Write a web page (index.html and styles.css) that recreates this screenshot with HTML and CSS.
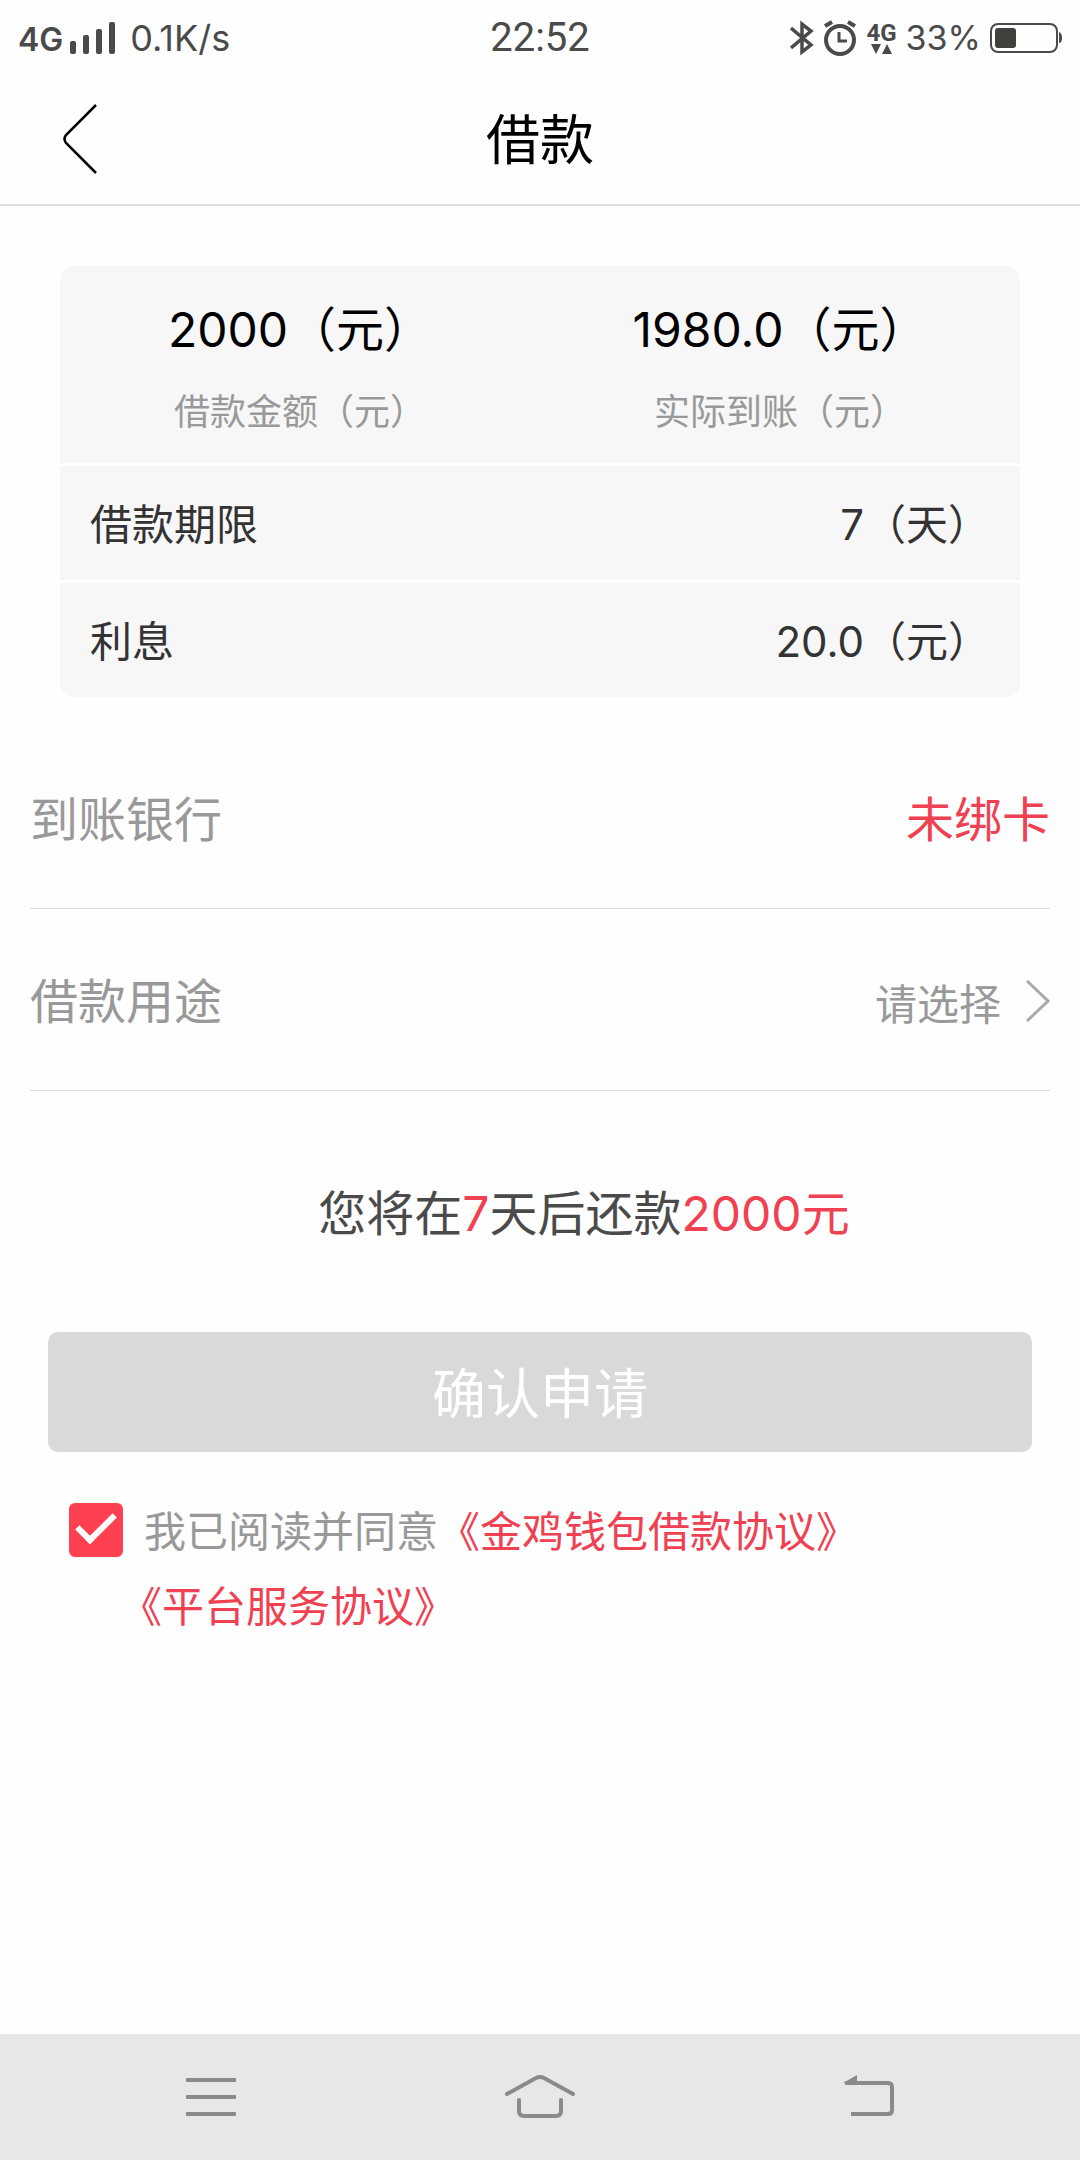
FILE: index.html
```html
<!DOCTYPE html>
<html lang="zh-cn">
<head>
    <meta charset="UTF-8">
    <title>借款</title>
    <meta name="viewport" content="width=device-width, initial-scale=1">
    <link rel="stylesheet" href="styles.css">
</head>
<body>
    <div class="status-bar">
        <div class="status-left">
            <span class="network">4G</span>
            <svg class="signal" width="46" height="34" viewBox="0 0 46 34" fill="#4a4a4a">
                <rect x="0" y="20" width="6" height="13" rx="2"/>
                <rect x="13" y="14" width="6" height="19" rx="2"/>
                <rect x="26" y="8" width="6" height="25" rx="2"/>
                <rect x="39" y="1" width="6" height="32" rx="2"/>
            </svg>
            <span class="speed">0.1K/s</span>
        </div>
        <div class="status-time">22:52</div>
        <div class="status-right">
            <svg width="24" height="36" viewBox="0 0 24 36" fill="none" stroke="#4a4a4a" stroke-width="3.5">
                <path d="M1 8L21 25L12 32V4L21 11L1 28"/>
            </svg>
            <svg width="34" height="36" viewBox="0 0 34 36" fill="none" stroke="#4a4a4a">
                <circle cx="17" cy="20" r="14" stroke-width="4"/>
                <path d="M16 12V21H24" stroke-width="3"/>
                <path d="M2 6L9 2M25 2L32 6" stroke-width="4"/>
            </svg>
            <div class="data">
                <span>4G</span>
                <svg width="22" height="10" viewBox="0 0 22 10" fill="#4a4a4a">
                    <path d="M0 0H10L5 10ZM11 10H21L16 0Z"/>
                </svg>
            </div>
            <span class="percent">33%</span>
            <svg width="72" height="30" viewBox="0 0 72 30">
                <rect x="1" y="1" width="66" height="28" rx="7" fill="none" stroke="#4a4a4a" stroke-width="2"/>
                <rect x="5" y="5" width="21" height="20" rx="3" fill="#40403c"/>
                <path d="M69 9Q72 10 72 15T69 20Z" fill="#4a4a4a"/>
            </svg>
        </div>
    </div>

    <header class="header">
        <button type="button" class="back-btn" aria-label="返回">
            <svg width="36" height="72" viewBox="0 0 36 72" fill="none" stroke="#000" stroke-width="2.5">
                <path d="M34 1L4 31Q1 35 4 39L34 69"/>
            </svg>
        </button>
        <h1>借款</h1>
    </header>

    <main class="main">
        <div class="card">
            <div class="card-top">
                <div class="amount">
                    <div class="amount-value">2000（元）</div>
                    <div class="amount-label">借款金额（元）</div>
                </div>
                <div class="amount">
                    <div class="amount-value">1980.0（元）</div>
                    <div class="amount-label">实际到账（元）</div>
                </div>
            </div>
            <div class="card-row">
                <span>借款期限</span>
                <span>7（天）</span>
            </div>
            <div class="card-row">
                <span>利息</span>
                <span>20.0（元）</span>
            </div>
        </div>

        <form class="loan-form">
            <div class="form-row">
                <span>到账银行</span>
                <a class="red" href="#">未绑卡</a>
            </div>
            <div class="form-row">
                <label for="purpose">借款用途</label>
                <div class="select-box">
                    <select id="purpose" name="purpose">
                        <option value="">请选择</option>
                    </select>
                    <svg width="24" height="44" viewBox="0 0 24 44" fill="none" stroke="#aaa" stroke-width="3">
                        <path d="M1 1L22 21L1 41"/>
                    </svg>
                </div>
            </div>

            <p class="repay">您将在<span class="red">7</span>天后还款<span class="red">2000元</span></p>

            <button type="submit" class="submit-btn" disabled>确认申请</button>

            <div class="agreement">
                <div class="agreement-line">
                    <input type="checkbox" id="agree" name="agree" checked>
                    <label for="agree">我已阅读并同意</label>
                    <a class="red" href="#">《金鸡钱包借款协议》</a>
                </div>
                <a class="red agreement-more" href="#">《平台服务协议》</a>
            </div>
        </form>
    </main>

    <!-- 系统导航栏 -->
    <nav class="nav-bar">
        <button type="button" aria-label="菜单">
            <svg width="50" height="44" viewBox="0 0 50 44" fill="#8a8a8a">
                <rect x="0" y="3" width="50" height="4" rx="1"/>
                <rect x="0" y="20" width="50" height="4" rx="1"/>
                <rect x="0" y="37" width="50" height="4" rx="1"/>
            </svg>
        </button>
        <button type="button" aria-label="主页">
            <svg width="70" height="44" viewBox="0 0 70 44" fill="none" stroke="#8a8a8a" stroke-width="4" stroke-linecap="round">
                <path d="M2 19L31 3Q35 1 39 3L68 19"/>
                <path d="M14 25V36Q14 41 19 41H51Q56 41 56 36V25"/>
            </svg>
        </button>
        <button type="button" aria-label="返回上一页">
            <svg width="52" height="44" viewBox="0 0 52 44" fill="none" stroke="#8a8a8a" stroke-width="4">
                <path d="M2 8H45Q49 8 49 12V35Q49 39 45 39H8"/>
                <path d="M0 8L14 0V8Z" fill="#8a8a8a" stroke="none"/>
            </svg>
        </button>
    </nav>

    <script>
        // 勾选协议并选择用途后才能提交
        const purpose = document.getElementById('purpose');
        const agree = document.getElementById('agree');
        const submitBtn = document.querySelector('.submit-btn');
        function checkForm() {
            submitBtn.disabled = !(purpose.value && agree.checked);
        }
        purpose.addEventListener('change', checkForm);
        agree.addEventListener('change', checkForm);
    </script>
</body>
</html>
```
FILE: styles.css
```css
* {
    box-sizing: border-box;
}
body {
    display: flex;
    flex-direction: column;
    min-height: 100vh;
    margin: 0;
    background: #fefefe;
    color: #333;
    font-family: Inter, "Noto Sans CJK SC", sans-serif;
    font-size: 42px;
    line-height: 60px;
}
button,
select {
    padding: 0;
    border: none;
    background: none;
    font-family: inherit;
    font-weight: inherit;
}
svg {
    display: block;
    flex: none;
}
a {
    text-decoration: none;
}
.red {
    color: #f04152;
}

/* 状态栏 */
.status-bar {
    display: grid;
    grid-template-columns: 1fr auto 1fr;
    align-items: center;
    height: 75px;
    padding: 0 18px;
    color: #4a4a4a;
    font-size: 36px;
    line-height: 40px;
}
.status-left,
.status-right {
    display: flex;
    align-items: center;
}
.status-right {
    justify-content: flex-end;
    gap: 9px;
}
.network {
    padding-top: 4px;
    font-size: 32px;
    font-weight: 600;
}
.signal {
    margin: 0 14px 0 7px;
}
.status-time {
    font-family: Roboto, sans-serif;
    font-size: 40px;
}
.data {
    display: flex;
    flex-direction: column;
    align-items: center;
    font-family: Roboto, sans-serif;
    font-size: 24px;
    font-weight: 700;
    line-height: 22px;
}
.percent {
    font-size: 34px;
}

/* 标题栏 */
.header {
    display: grid;
    grid-template-columns: 1fr auto 1fr;
    align-items: center;
    height: 131px;
    padding: 0 62px;
    border-bottom: 2px solid #ddd;
    color: #000;
}
.back-btn {
    justify-self: start;
}
h1 {
    margin: 0;
    padding-top: 2px;
    font-size: 54px;
    font-weight: 380;
}

.main {
    flex: 1;
    padding: 60px 0;
    font-weight: 380;
}
.card {
    display: flex;
    flex-direction: column;
    gap: 3px;
    margin: 0 60px 30px;
    border-radius: 14px;
    overflow: hidden;
}
.card-top,
.card-row {
    display: flex;
    background: #f7f7f7;
}
.card-top {
    padding: 34px 0 21px;
}
.amount {
    flex: 1;
    text-align: center;
}
.amount-value {
    margin-bottom: 22px;
    color: #000;
    font-size: 48px;
}
.amount-label {
    color: #999;
    font-size: 36px;
}
.card-row {
    justify-content: space-between;
    padding: 29px 30px 25px;
}

.form-row {
    display: flex;
    align-items: center;
    justify-content: space-between;
    margin: 0 30px;
    padding: 63px 0 58px;
    border-bottom: 1px solid #ddd;
    color: #999;
    font-size: 48px;
}
.select-box {
    display: flex;
    align-items: center;
    gap: 24px;
}
.select-box select {
    appearance: none;
    padding-top: 4px;
    color: #999;
    font-size: 42px;
}
.repay {
    margin: 93px 0 88px;
    padding-left: 88px;
    color: #4a4a4a;
    font-size: 48px;
    text-align: center;
}
.submit-btn {
    display: block;
    width: calc(100% - 96px);
    height: 120px;
    margin: 0 48px;
    padding-bottom: 4px;
    border-radius: 10px;
    background: #ff4051;
    color: #fff;
    font-size: 54px;
}
.submit-btn:disabled {
    background: #d9d9d9;
}

.agreement {
    padding: 50px 69px;
    color: #999;
}
.agreement-line {
    display: flex;
    align-items: center;
    margin-bottom: 15px;
}
.agreement input {
    appearance: none;
    width: 54px;
    height: 54px;
    margin: 0 21px 4px 0;
    border: 2px solid #ff4051;
    border-radius: 6px;
}
.agreement input:checked {
    background: #ff4051;
}
.agreement input:checked::before {
    content: "";
    display: block;
    width: 32px;
    height: 15px;
    margin: 8px 6px;
    border-left: 6px solid #fff;
    border-bottom: 6px solid #fff;
    transform: rotate(-45deg);
}
.agreement-more {
    display: block;
    padding-left: 51px;
}

/* 系统导航栏 */
.nav-bar {
    display: flex;
    align-items: center;
    height: 126px;
    padding: 0 46px;
    background: #e7e7e7;
}
.nav-bar button {
    display: flex;
    flex: 1;
    justify-content: center;
}
```
